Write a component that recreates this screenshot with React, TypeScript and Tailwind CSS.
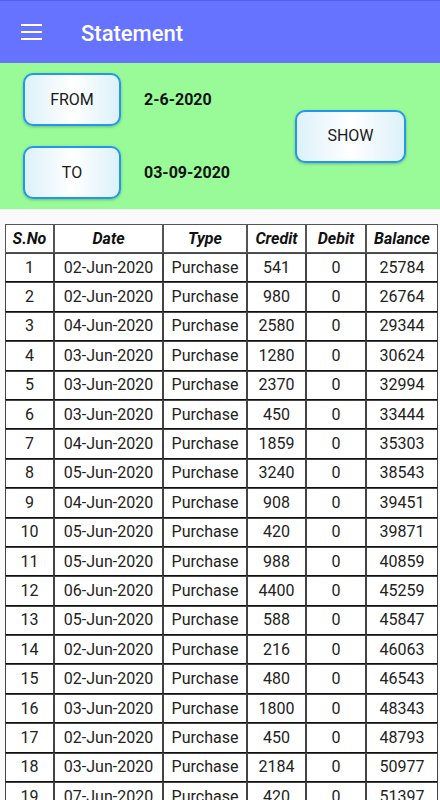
import { useState } from 'react';

const rows: [number, string, number, number][] = [
  [1, '02-Jun-2020', 541, 25784],
  [2, '02-Jun-2020', 980, 26764],
  [3, '04-Jun-2020', 2580, 29344],
  [4, '03-Jun-2020', 1280, 30624],
  [5, '03-Jun-2020', 2370, 32994],
  [6, '03-Jun-2020', 450, 33444],
  [7, '04-Jun-2020', 1859, 35303],
  [8, '05-Jun-2020', 3240, 38543],
  [9, '04-Jun-2020', 908, 39451],
  [10, '05-Jun-2020', 420, 39871],
  [11, '05-Jun-2020', 988, 40859],
  [12, '06-Jun-2020', 4400, 45259],
  [13, '05-Jun-2020', 588, 45847],
  [14, '02-Jun-2020', 216, 46063],
  [15, '02-Jun-2020', 480, 46543],
  [16, '03-Jun-2020', 1800, 48343],
  [17, '02-Jun-2020', 450, 48793],
  [18, '03-Jun-2020', 2184, 50977],
  [19, '07-Jun-2020', 420, 51397],
];

const headers = ['S.No', 'Date', 'Type', 'Credit', 'Debit', 'Balance'];
const widths = [49, 109, 84, 59, 60, 72];

function GradientButton({ label, className }: { label: string; className: string }) {
  return (
    <button
      className={`flex items-center justify-center rounded-[10px] border-2 border-[#2196f3] bg-linear-to-r from-[#dcf1fa] via-white to-[#dcf1fa] text-[16px] text-[#1a1a1a] shadow-[0_1px_3px_rgba(0,0,0,0.25)] ${className}`}
    >
      {label}
    </button>
  );
}

export default function App() {
  const [from] = useState('2-6-2020');
  const [to] = useState('03-09-2020');

  return (
    <div className="min-h-[800px] w-[440px] overflow-hidden bg-[#fafafa] font-['Roboto','Liberation_Sans',sans-serif]">
      <div className="flex h-[63px] items-center border-t border-[#5560e6] bg-[#6673ff] pl-[21px]">
        <div className="flex w-[21px] flex-col gap-[5px]">
          <span className="h-[2px] w-full bg-white" />
          <span className="h-[2px] w-full bg-white" />
          <span className="h-[2px] w-full bg-white" />
        </div>
        <h1 className="ml-[39px] mt-[3px] text-[22px] font-medium text-white">Statement</h1>
      </div>

      <div className="flex h-[146px] items-center bg-[#98fb98] pl-[23px] pr-[34px]">
        <div className="flex flex-col gap-[20px]">
          <div className="flex items-center">
            <GradientButton label="FROM" className="h-[53px] w-[98px]" />
            <span className="ml-[23px] text-[16px] font-bold text-[#111]">{from}</span>
          </div>
          <div className="flex items-center">
            <GradientButton label="TO" className="h-[53px] w-[98px]" />
            <span className="ml-[23px] text-[16px] font-bold text-[#111]">{to}</span>
          </div>
        </div>
        <GradientButton label="SHOW" className="ml-auto h-[53px] w-[111px]" />
      </div>

      <table className="ml-[5px] mt-[15px] table-fixed border-separate border-spacing-0 bg-white text-[16px] text-[#222]">
        <colgroup>
          {widths.map((w, i) => (
            <col key={i} style={{ width: w }} />
          ))}
        </colgroup>
        <thead>
          <tr className="h-[29px]">
            {headers.map((h) => (
              <th key={h} className="border border-[#555] p-0 text-center font-bold italic text-[#111]">
                {h}
              </th>
            ))}
          </tr>
        </thead>
        <tbody>
          {rows.map(([no, date, credit, balance]) => (
            <tr key={no} className="h-[29.4px]">
              <td className="border border-[#444] border-b-[#111] p-0 text-center">{no}</td>
              <td className="border border-[#444] border-b-[#111] p-0 text-center">{date}</td>
              <td className="border border-[#444] border-b-[#111] p-0 text-center">Purchase</td>
              <td className="border border-[#444] border-b-[#111] p-0 text-center">{credit}</td>
              <td className="border border-[#444] border-b-[#111] p-0 text-center">0</td>
              <td className="border border-[#444] border-b-[#111] p-0 text-center">{balance}</td>
            </tr>
          ))}
        </tbody>
      </table>
    </div>
  );
}
